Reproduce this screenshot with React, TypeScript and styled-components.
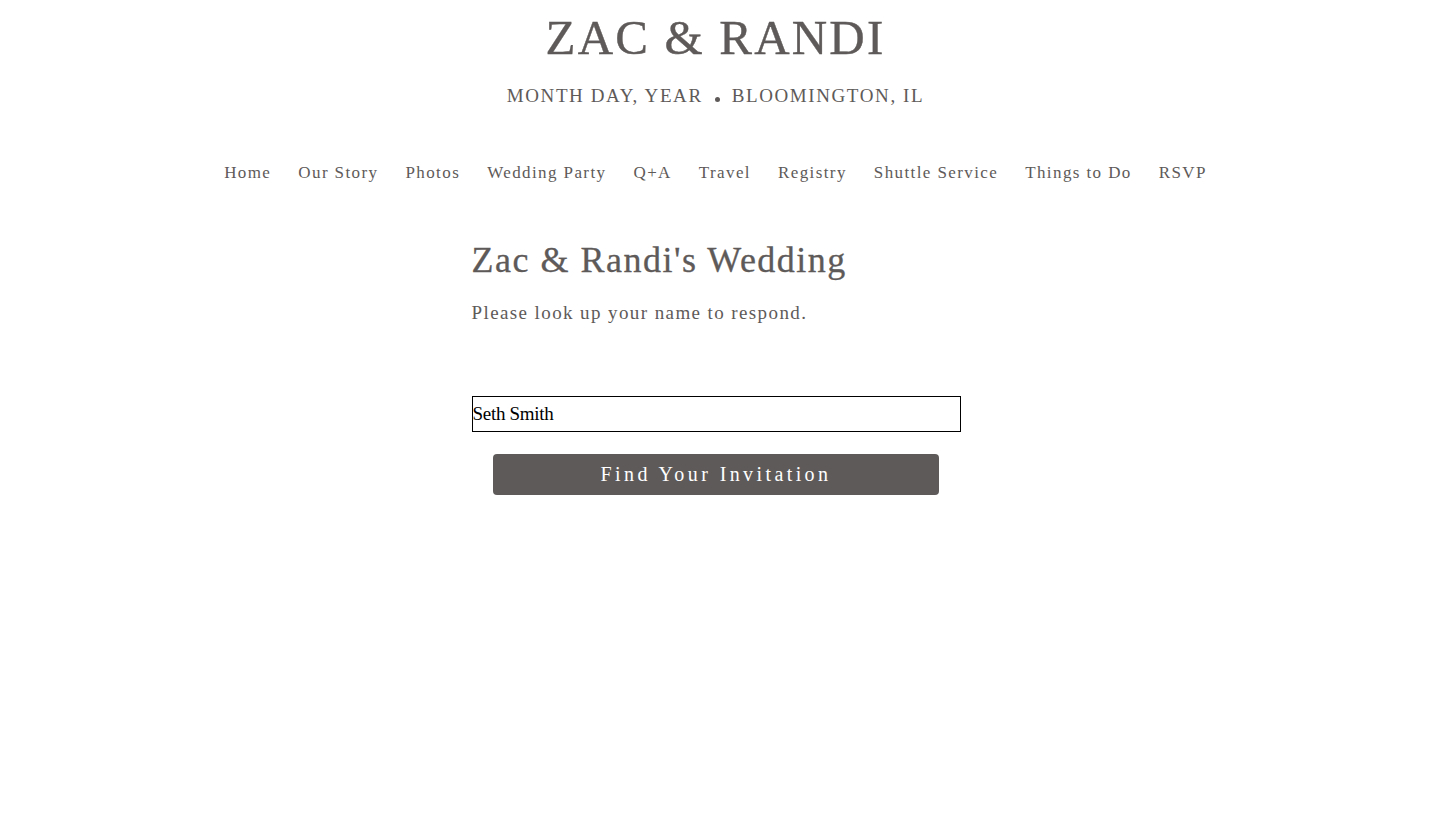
import React, { FC, useState } from 'react';
import styled, { createGlobalStyle } from 'styled-components';

const ink = '#5e5a59';
const serif = `"Liberation Serif", "DejaVu Serif", serif`;

const GlobalStyle = createGlobalStyle`
    html, body {
        margin: 0;
        padding: 0;
        background: #ffffff;
        font-family: ${serif};
        color: ${ink};
    }
    input, button {
        font-family: ${serif};
    }
`;

const Page = styled.div`
    display: flex;
    flex-direction: column;
    align-items: center;
    min-height: 823px;
`;

const Header = styled.header`
    display: flex;
    flex-direction: column;
    align-items: center;
    padding-top: 12px;
`;

const Title = styled.h1`
    margin: 0;
    font-size: 49px;
    font-weight: 400;
    letter-spacing: 2.2px;
    line-height: 52px;
    color: ${ink};
    -webkit-text-stroke: 0.4px ${ink};
`;

const Subtitle = styled.p`
    display: flex;
    align-items: center;
    gap: 12px;
    margin: 20px 0 0;
    font-size: 19px;
    letter-spacing: 1.6px;
    line-height: 24px;
    text-transform: uppercase;
`;

const Dot = styled.span`
    width: 5px;
    height: 5px;
    border-radius: 50%;
    background: ${ink};
    margin-top: 7px;
`;

const Nav = styled.nav`
    display: flex;
    gap: 27px;
    margin-top: 53px;
`;

const NavLink = styled.a`
    font-size: 17px;
    letter-spacing: 1.4px;
    line-height: 24px;
    color: ${ink};
    text-decoration: none;
    cursor: pointer;
`;

const Content = styled.main`
    display: flex;
    flex-direction: column;
    box-sizing: border-box;
    width: 490px;
    padding-left: 1px;
    margin-top: 53px;
`;

const Heading = styled.h2`
    margin: 0;
    font-size: 36px;
    font-weight: 400;
    letter-spacing: 1.5px;
    line-height: 44px;
    -webkit-text-stroke: 0.3px ${ink};
`;

const Lead = styled.p`
    margin: 19px 0 0;
    font-size: 19px;
    letter-spacing: 1.4px;
    line-height: 24px;
`;

const Form = styled.form`
    display: flex;
    flex-direction: column;
    align-items: center;
    margin-top: 71px;
`;

const NameInput = styled.input`
    box-sizing: border-box;
    width: 100%;
    height: 36px;
    padding: 0;
    border: 1px solid #000;
    border-radius: 0;
    font-family: ${serif};
    font-size: 19px;
    letter-spacing: -0.3px;
    color: #000;
    background: #fff;
    outline: none;
`;

const SubmitButton = styled.button`
    width: 446px;
    height: 41px;
    margin-top: 22px;
    border: none;
    border-radius: 4px;
    background: ${ink};
    color: #fff;
    font-family: ${serif};
    font-size: 20px;
    letter-spacing: 3.4px;
    cursor: pointer;
`;

const links = ['Home', 'Our Story', 'Photos', 'Wedding Party', 'Q+A', 'Travel', 'Registry', 'Shuttle Service', 'Things to Do', 'RSVP'];

const App: FC = () => {
    const [name, setName] = useState<string>('Seth Smith');

    return (
        <>
            <GlobalStyle />
            <Page>
                <Header>
                    <Title>ZAC &amp; RANDI</Title>
                    <Subtitle>
                        <span>Month Day, Year</span>
                        <Dot />
                        <span>Bloomington, IL</span>
                    </Subtitle>
                    <Nav>
                        {links.map((l) => (
                            <NavLink key={l}>{l}</NavLink>
                        ))}
                    </Nav>
                </Header>

                <Content>
                    <Heading>Zac &amp; Randi's Wedding</Heading>
                    <Lead>Please look up your name to respond.</Lead>
                    <Form onSubmit={(e) => e.preventDefault()}>
                        <NameInput value={name} onChange={(e) => setName(e.target.value)} />
                        <SubmitButton type="submit">Find Your Invitation</SubmitButton>
                    </Form>
                </Content>
            </Page>
        </>
    );
};

export default App;
